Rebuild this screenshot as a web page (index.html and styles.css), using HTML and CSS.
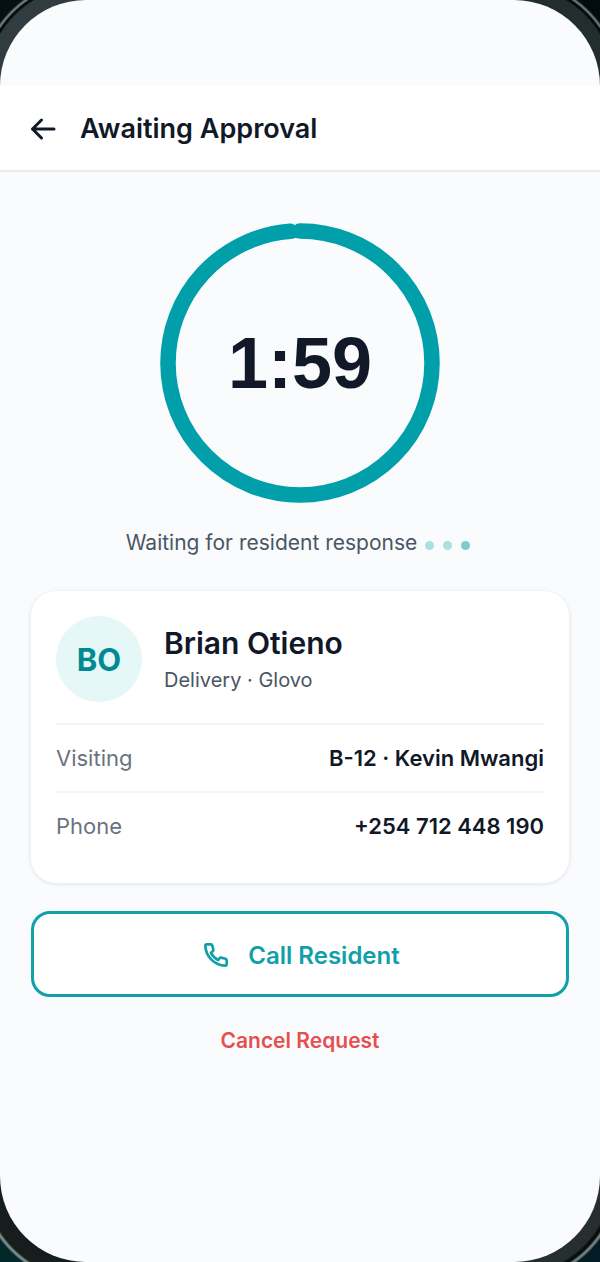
FILE: index.html
```html
<!DOCTYPE html>
<html lang="en">
<head>
  <meta charset="utf-8">
  <meta name="viewport" content="width=device-width, initial-scale=1">
  <title>Awaiting Approval</title>
  <link rel="stylesheet" href="styles.css">
</head>
<body>
  <div class="screen">
    <header class="topbar">
      <button class="back" type="button" aria-label="Back">
        <svg class="back-icon" viewBox="0 0 26 22" aria-hidden="true"><path d="M11.500 2 2.500 11l9 9M2.500 11H24"/></svg>
      </button>
      <h1 class="title">Awaiting Approval</h1>
    </header>

    <main class="content">
      <div class="timer" role="timer">
        <svg class="ring" viewBox="0 0 280 280" aria-hidden="true">
          <circle class="ring-track" cx="140" cy="140" r="132"/>
          <circle class="ring-value" cx="140" cy="140" r="132" pathLength="120" transform="rotate(-90 140 140)"/>
        </svg>
        <span class="time">1:59</span>
      </div>

      <p class="status">Waiting for resident response
        <span class="dots" aria-hidden="true"><i class="dot"></i><i class="dot"></i><i class="dot dot-active"></i></span>
      </p>

      <section class="card">
        <div class="person">
          <div class="avatar" aria-hidden="true">BO</div>
          <div class="identity">
            <h2 class="name">Brian Otieno</h2>
            <p class="role">Delivery · Glovo</p>
          </div>
        </div>
        <dl class="details">
          <div class="row"><dt>Visiting</dt><dd>B-12 · Kevin Mwangi</dd></div>
          <div class="row"><dt>Phone</dt><dd>+254 712 448 190</dd></div>
        </dl>
      </section>

      <button class="call" type="button">
        <svg class="call-icon" viewBox="0 0 24 24" aria-hidden="true"><path d="M5 4h3.200a1 1 0 0 1 1 .8l.8 3.400a1 1 0 0 1-.4 1L8.200 10.400a12 12 0 0 0 5.400 5.400l1.200-1.400a1 1 0 0 1 1-.4l3.400.8a1 1 0 0 1 .8 1V19a1 1 0 0 1-1 1A15.500 15.500 0 0 1 4 5a1 1 0 0 1 1-1z"/></svg>
        Call Resident
      </button>
      <button class="cancel" type="button">Cancel Request</button>
    </main>
  </div>
</body>
</html>
```
FILE: styles.css
```css
* {
  box-sizing: border-box;
}

body {
  margin: 0;
  font-family: Inter, "Liberation Sans", sans-serif;
  color: #111827;
  background:
    radial-gradient(circle at 100% 100%, #303c3f 100px, #080f11 101px 103px, #6d797a 104px 105px, #061012 107px) 0 0 / 86px 86px no-repeat,
    radial-gradient(circle at 0 100%, #222d2d 100px, #070d0f 101px 103px, #687374 104px 105px, #020b10 107px) 100% 0 / 86px 86px no-repeat,
    radial-gradient(circle at 100% 0, #151e1d 102px, #7c8b8b 104px 105px, #03282b 107px) 0 100% / 86px 86px no-repeat,
    radial-gradient(circle at 0 0, #262f2e 98px, #080d0e 100px 102px, #718080 104px 105px, #021b24 107px) 100% 100% / 86px 86px no-repeat,
    #fafbfd;
}

button {
  padding: 0;
  border: 0;
  background: none;
  font: inherit;
  cursor: pointer;
}

h1, h2, p, dl, dd {
  margin: 0;
}

.screen {
  min-height: 100vh;
  padding-top: 86px;
  overflow: hidden;
  border-radius: 86px;
  background: #fafbfd;
}

.topbar {
  display: flex;
  align-items: center;
  gap: 24px;
  height: 86px;
  padding: 2px 30px 0;
  border-bottom: 2px solid #e9ebee;
  background: #fff;
}

.back {
  display: flex;
}

.back-icon {
  width: 26px;
  height: 22px;
  fill: none;
  stroke: #111827;
  stroke-width: 3;
  stroke-linecap: round;
  stroke-linejoin: round;
}

.title {
  font-size: 27px;
  font-weight: 600;
  line-height: 36px;
}

.content {
  display: flex;
  flex-direction: column;
  padding: 51px 31px;
}

.timer {
  display: grid;
  place-items: center;
  align-self: center;
}

.ring,
.time {
  grid-area: 1 / 1;
}

.ring {
  width: 280px;
  height: 280px;
  fill: none;
  stroke-width: 15.500;
}

.ring-track {
  stroke: #e6f7f7;
}

.ring-value {
  stroke: #009faa;
  stroke-linecap: round;
  stroke-dasharray: 118.600 1.400;
}

.time {
  font-family: "Liberation Sans", Arial, sans-serif;
  font-size: 72px;
  font-weight: 700;
  line-height: 80px;
}

.status {
  display: flex;
  justify-content: center;
  align-items: center;
  gap: 8px;
  margin-top: 24px;
  padding-right: 4px;
  font-size: 21px;
  line-height: 32px;
  color: #4b5563;
}

.dots {
  display: flex;
  gap: 9px;
  padding-top: 5px;
}

.dot {
  width: 9px;
  height: 9px;
  border-radius: 50%;
  background: #addfdf;
}

.dot-active {
  background: #7ccccf;
}

.card {
  margin-top: 32px;
  padding: 25px 25px 24px;
  border-radius: 25px;
  background: #fff;
  box-shadow: 0 1px 5px rgba(17, 24, 39, 0.1);
}

.person {
  display: flex;
  align-items: center;
  gap: 22px;
  padding-bottom: 21px;
}

.avatar {
  display: grid;
  place-items: center;
  width: 86px;
  height: 86px;
  border-radius: 50%;
  background: #e6f7f7;
  color: #008b94;
  font-size: 31px;
  font-weight: 700;
}

.name {
  font-size: 30px;
  font-weight: 600;
  line-height: 42px;
}

.role {
  font-size: 20px;
  line-height: 32px;
  color: #4b5563;
}

.row {
  display: flex;
  justify-content: space-between;
  align-items: center;
  height: 68px;
  border-top: 2px solid #f3f4f6;
  font-size: 22px;
}

.row dt {
  color: #6b7280;
}

.row dd {
  font-weight: 600;
}

.call {
  display: flex;
  justify-content: center;
  align-items: center;
  gap: 16px;
  height: 86px;
  margin-top: 28px;
  padding-top: 2px;
  border: 3px solid #119fa9;
  border-radius: 19px;
  background: #fff;
  color: #119fa9;
  font-size: 24px;
  font-weight: 600;
}

.call-icon {
  width: 32px;
  height: 32px;
  fill: none;
  stroke: currentColor;
  stroke-width: 2;
  stroke-linecap: round;
  stroke-linejoin: round;
}

.cancel {
  align-self: center;
  margin-top: 28px;
  color: #e5504f;
  font-size: 21px;
  font-weight: 600;
  line-height: 32px;
}
```
